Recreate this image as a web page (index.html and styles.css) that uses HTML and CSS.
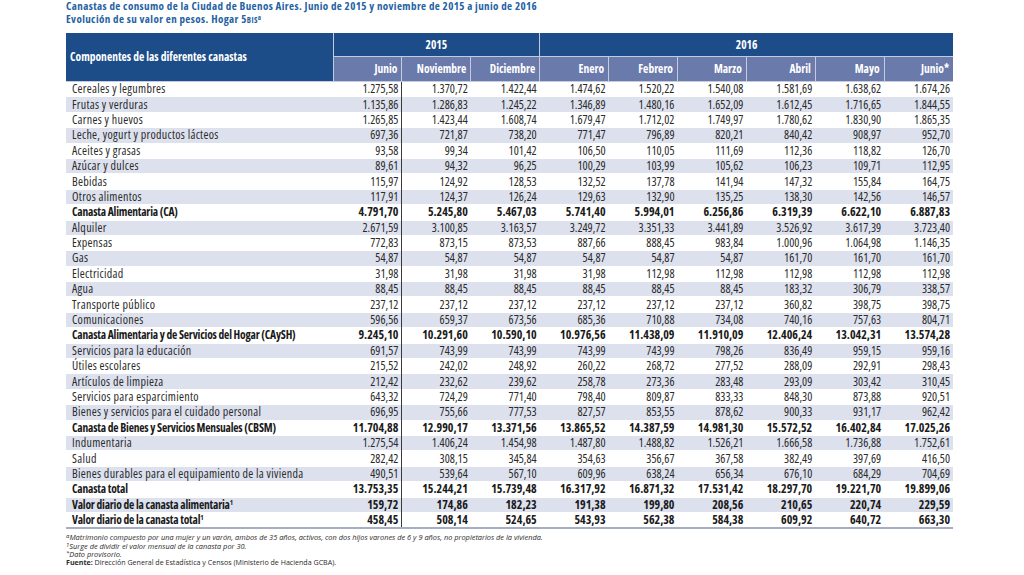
FILE: index.html
```html
<!DOCTYPE html>
<html lang="es">
<head>
<meta charset="utf-8">
<title>Canastas de consumo</title>
<link rel="stylesheet" href="styles.css">
</head>
<body>
<div class="page">
  <h1 class="title">Canastas de consumo de la Ciudad de Buenos Aires. Junio de 2015 y noviembre de 2015 a junio de 2016<br>Evolución de su valor en pesos. Hogar 5<span class="sc">bis</span><sup class="sup">a</sup></h1>
  <table class="data">
    <colgroup>
      <col class="c-label"><col class="c-num"><col class="c-num"><col class="c-num"><col class="c-num"><col class="c-num"><col class="c-num"><col class="c-num"><col class="c-num"><col class="c-num">
    </colgroup>
    <thead>
      <tr class="h-year">
        <th class="h-label" rowspan="2">Componentes de las diferentes canastas</th>
        <th class="h-y" colspan="3">2015</th>
        <th class="h-y" colspan="6">2016</th>
      </tr>
      <tr class="h-month">
        <th>Junio</th><th>Noviembre</th><th>Diciembre</th><th>Enero</th><th>Febrero</th><th>Marzo</th><th>Abril</th><th>Mayo</th><th>Junio*</th>
      </tr>
    </thead>
    <tbody>
      <tr><td>Cereales y legumbres</td><td>1.275,58</td><td>1.370,72</td><td>1.422,44</td><td>1.474,62</td><td>1.520,22</td><td>1.540,08</td><td>1.581,69</td><td>1.638,62</td><td>1.674,26</td></tr>
      <tr><td>Frutas y verduras</td><td>1.135,86</td><td>1.286,83</td><td>1.245,22</td><td>1.346,89</td><td>1.480,16</td><td>1.652,09</td><td>1.612,45</td><td>1.716,65</td><td>1.844,55</td></tr>
      <tr><td>Carnes y huevos</td><td>1.265,85</td><td>1.423,44</td><td>1.608,74</td><td>1.679,47</td><td>1.712,02</td><td>1.749,97</td><td>1.780,62</td><td>1.830,90</td><td>1.865,35</td></tr>
      <tr><td>Leche, yogurt y productos lácteos</td><td>697,36</td><td>721,87</td><td>738,20</td><td>771,47</td><td>796,89</td><td>820,21</td><td>840,42</td><td>908,97</td><td>952,70</td></tr>
      <tr><td>Aceites y grasas</td><td>93,58</td><td>99,34</td><td>101,42</td><td>106,50</td><td>110,05</td><td>111,69</td><td>112,36</td><td>118,82</td><td>126,70</td></tr>
      <tr><td>Azúcar y dulces</td><td>89,61</td><td>94,32</td><td>96,25</td><td>100,29</td><td>103,99</td><td>105,62</td><td>106,23</td><td>109,71</td><td>112,95</td></tr>
      <tr><td>Bebidas</td><td>115,97</td><td>124,92</td><td>128,53</td><td>132,52</td><td>137,78</td><td>141,94</td><td>147,32</td><td>155,84</td><td>164,75</td></tr>
      <tr><td>Otros alimentos</td><td>117,91</td><td>124,37</td><td>126,24</td><td>129,63</td><td>132,90</td><td>135,25</td><td>138,30</td><td>142,56</td><td>146,57</td></tr>
      <tr class="total"><td>Canasta Alimentaria (CA)</td><td>4.791,70</td><td>5.245,80</td><td>5.467,03</td><td>5.741,40</td><td>5.994,01</td><td>6.256,86</td><td>6.319,39</td><td>6.622,10</td><td>6.887,83</td></tr>
      <tr><td>Alquiler</td><td>2.671,59</td><td>3.100,85</td><td>3.163,57</td><td>3.249,72</td><td>3.351,33</td><td>3.441,89</td><td>3.526,92</td><td>3.617,39</td><td>3.723,40</td></tr>
      <tr><td>Expensas</td><td>772,83</td><td>873,15</td><td>873,53</td><td>887,66</td><td>888,45</td><td>983,84</td><td>1.000,96</td><td>1.064,98</td><td>1.146,35</td></tr>
      <tr><td>Gas</td><td>54,87</td><td>54,87</td><td>54,87</td><td>54,87</td><td>54,87</td><td>54,87</td><td>161,70</td><td>161,70</td><td>161,70</td></tr>
      <tr><td>Electricidad</td><td>31,98</td><td>31,98</td><td>31,98</td><td>31,98</td><td>112,98</td><td>112,98</td><td>112,98</td><td>112,98</td><td>112,98</td></tr>
      <tr><td>Agua</td><td>88,45</td><td>88,45</td><td>88,45</td><td>88,45</td><td>88,45</td><td>88,45</td><td>183,32</td><td>306,79</td><td>338,57</td></tr>
      <tr><td>Transporte público</td><td>237,12</td><td>237,12</td><td>237,12</td><td>237,12</td><td>237,12</td><td>237,12</td><td>360,82</td><td>398,75</td><td>398,75</td></tr>
      <tr><td>Comunicaciones</td><td>596,56</td><td>659,37</td><td>673,56</td><td>685,36</td><td>710,88</td><td>734,08</td><td>740,16</td><td>757,63</td><td>804,71</td></tr>
      <tr class="total"><td>Canasta Alimentaria y de Servicios del Hogar (CAySH)</td><td>9.245,10</td><td>10.291,60</td><td>10.590,10</td><td>10.976,56</td><td>11.438,09</td><td>11.910,09</td><td>12.406,24</td><td>13.042,31</td><td>13.574,28</td></tr>
      <tr><td>Servicios para la educación</td><td>691,57</td><td>743,99</td><td>743,99</td><td>743,99</td><td>743,99</td><td>798,26</td><td>836,49</td><td>959,15</td><td>959,16</td></tr>
      <tr><td>Útiles escolares</td><td>215,52</td><td>242,02</td><td>248,92</td><td>260,22</td><td>268,72</td><td>277,52</td><td>288,09</td><td>292,91</td><td>298,43</td></tr>
      <tr><td>Artículos de limpieza</td><td>212,42</td><td>232,62</td><td>239,62</td><td>258,78</td><td>273,36</td><td>283,48</td><td>293,09</td><td>303,42</td><td>310,45</td></tr>
      <tr><td>Servicios para esparcimiento</td><td>643,32</td><td>724,29</td><td>771,40</td><td>798,40</td><td>809,87</td><td>833,33</td><td>848,30</td><td>873,88</td><td>920,51</td></tr>
      <tr><td>Bienes y servicios para el cuidado personal</td><td>696,95</td><td>755,66</td><td>777,53</td><td>827,57</td><td>853,55</td><td>878,62</td><td>900,33</td><td>931,17</td><td>962,42</td></tr>
      <tr class="total"><td>Canasta de Bienes y Servicios Mensuales (CBSM)</td><td>11.704,88</td><td>12.990,17</td><td>13.371,56</td><td>13.865,52</td><td>14.387,59</td><td>14.981,30</td><td>15.572,52</td><td>16.402,84</td><td>17.025,26</td></tr>
      <tr><td>Indumentaria</td><td>1.275,54</td><td>1.406,24</td><td>1.454,98</td><td>1.487,80</td><td>1.488,82</td><td>1.526,21</td><td>1.666,58</td><td>1.736,88</td><td>1.752,61</td></tr>
      <tr><td>Salud</td><td>282,42</td><td>308,15</td><td>345,84</td><td>354,63</td><td>356,67</td><td>367,58</td><td>382,49</td><td>397,69</td><td>416,50</td></tr>
      <tr><td>Bienes durables para el equipamiento de la vivienda</td><td>490,51</td><td>539,64</td><td>567,10</td><td>609,96</td><td>638,24</td><td>656,34</td><td>676,10</td><td>684,29</td><td>704,69</td></tr>
      <tr class="total"><td>Canasta total</td><td>13.753,35</td><td>15.244,21</td><td>15.739,48</td><td>16.317,92</td><td>16.871,32</td><td>17.531,42</td><td>18.297,70</td><td>19.221,70</td><td>19.899,06</td></tr>
      <tr class="total"><td>Valor diario de la canasta alimentaria<sup class="fn">1</sup></td><td>159,72</td><td>174,86</td><td>182,23</td><td>191,38</td><td>199,80</td><td>208,56</td><td>210,65</td><td>220,74</td><td>229,59</td></tr>
      <tr class="total last"><td>Valor diario de la canasta total<sup class="fn">1</sup></td><td>458,45</td><td>508,14</td><td>524,65</td><td>543,93</td><td>562,38</td><td>584,38</td><td>609,92</td><td>640,72</td><td>663,30</td></tr>
    </tbody>
  </table>
  <div class="notes">
    <p class="note"><sup class="nsup">a</sup>Matrimonio compuesto por una mujer y un varón, ambos de 35 años, activos, con dos hijos varones de 6 y 9 años, no propietarios de la vivienda.</p>
    <p class="note"><sup class="nsup">1</sup>Surge de dividir el valor mensual de la canasta por 30.</p>
    <p class="note"><sup class="nsup">*</sup>Dato provisorio.</p>
    <p class="source"><b>Fuente:</b> Dirección General de Estadística y Censos (Ministerio de Hacienda GCBA).</p>
  </div>
</div>
</body>
</html>
```
FILE: styles.css
```css
html, body {
  margin: 0;
  padding: 0;
  background: #ffffff;
}
body {
  font-family: "Open Sans", "Roboto", sans-serif;
  font-stretch: 75%;
  color: #2b2b2b;
}
.page {
  padding: 0 0 0 66px;
}
.title {
  margin: 0;
  font-size: 11px;
  line-height: 12.5px;
  font-weight: bold;
  letter-spacing: 0.4px;
  color: #2462a3;
}
.sc {
  font-variant: small-caps;
  font-size: 11px;
}
.sup {
  font-size: 7px;
  vertical-align: top;
  line-height: 9px;
}
.data {
  margin-top: 8px;
  border-collapse: collapse;
  table-layout: fixed;
  width: 887px;
  font-size: 12px;
}
.c-label { width: 267px; }
.c-num { width: 68.9px; }
thead th {
  color: #ffffff;
  font-weight: bold;
  font-size: 11.5px;
  padding: 0 4px;
  border: 1px solid #c4cbe0;
  border-top: none;
  line-height: 12px;
}
.h-year th {
  background: #1c4d88;
  height: 23px;
  text-align: center;
}
.h-year .h-label {
  text-align: left;
  padding-left: 4px;
  border-left: none;
}
.h-year th:last-child { border-right: none; }
.h-month th {
  background: #6a7aab;
  height: 24px;
  text-align: right;
  padding-right: 4px;
}
.h-month th:last-child { border-right: none; }
tbody td {
  height: 14.4px;
  padding: 0 3px 0 6px;
  text-align: right;
  white-space: nowrap;
  line-height: 12px;
  border-top: 1px solid #ffffff;
}
tbody td:first-child {
  text-align: left;
  letter-spacing: 0.3px;
}
tbody td:nth-child(2) {
  border-right: 1px solid #3a3a3a;
}
tbody tr:nth-child(even) td {
  background: #dde1ee;
}
tbody tr.total td {
  font-weight: bold;
  color: #1a1a1a;
}
tbody tr.total td:first-child {
  font-size: 11.5px;
  letter-spacing: -0.2px;
}
tbody tr.last td {
  border-bottom: 2px solid #a6aec6;
}
.fn {
  font-size: 7px;
  vertical-align: 4px;
  line-height: 0;
}
.notes {
  margin-top: 4px;
  font-size: 7.4px;
  line-height: 8.3px;
  color: #2b2b2b;
}
.note {
  margin: 0;
  font-style: italic;
  font-stretch: 100%;
}
.nsup {
  font-size: 6px;
  vertical-align: 2px;
  line-height: 0;
}
.source {
  margin: 0;
  font-stretch: 100%;
  font-size: 7.1px;
}
```
